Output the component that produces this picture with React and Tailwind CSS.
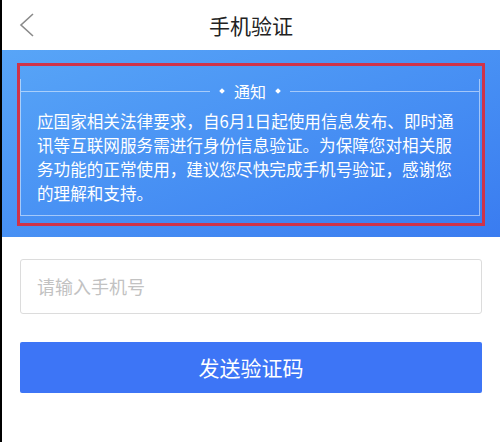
import React from "react";

const lines = [
  "应国家相关法律要求，自6月1日起使用信息发布、即时通",
  "讯等互联网服务需进行身份信息验证。为保障您对相关服",
  "务功能的正常使用，建议您尽快完成手机号验证，感谢您",
  "的理解和支持。",
];

function App() {
  return (
    <div
      className="w-[500px] h-[442px] bg-white border-l-2 border-black overflow-hidden flex flex-col"
      style={{ fontFamily: '"Noto Sans CJK SC", "Noto Sans", sans-serif' }}
    >
      {/* header */}
      <div className="relative h-[50px] flex items-center justify-center shrink-0">
        <svg
          className="absolute left-[16px] top-[12px]"
          width="20"
          height="26"
          viewBox="0 0 20 26"
          fill="none"
        >
          <polyline
            points="15,2 3,13 15,24"
            stroke="#8a8a8a"
            strokeWidth="1.6"
            strokeLinejoin="miter"
          />
        </svg>
        <p className="text-[21px] text-[#222] leading-none">手机验证</p>
      </div>

      {/* notice band */}
      <div className="bg-gradient-to-br from-[#58a5f7] to-[#3a7cf0] px-[15px] pt-[13px] pb-[11px] shrink-0">
        <div className="border-[3px] border-[#cf3349]">
          <div className="mt-[25px] mr-[2px] mb-[7px] border-x border-b border-white/50 pb-[10px]">
            <div className="-mt-[12px] h-[24px] flex items-center">
              <div className="flex-1 h-px bg-white/50" />
              <div className="w-[4px] h-[4px] bg-white rotate-45 mx-[10px]" />
              <span className="text-[16px] text-white leading-none">通知</span>
              <div className="w-[4px] h-[4px] bg-white rotate-45 mx-[10px]" />
              <div className="flex-1 h-px bg-white/50" />
            </div>
            <div className="mt-[6px] pl-[16px] text-white text-[16.6px] leading-[24px]">
              {lines.map((l) => (
                <p key={l} className="whitespace-nowrap">
                  {l}
                </p>
              ))}
            </div>
          </div>
        </div>
      </div>

      {/* form */}
      <div className="px-[18px] pt-[22px] flex flex-col">
        <div className="h-[55px] border border-[#dcdcdc] rounded-[3px] flex items-center pl-[16px]">
          <span className="text-[18px] text-[#c2c2c2]">请输入手机号</span>
        </div>
        <button className="mt-[28px] h-[51px] bg-[#3d75f6] rounded-[2px] text-white text-[21px]">
          发送验证码
        </button>
      </div>
    </div>
  );
}

export default App;
